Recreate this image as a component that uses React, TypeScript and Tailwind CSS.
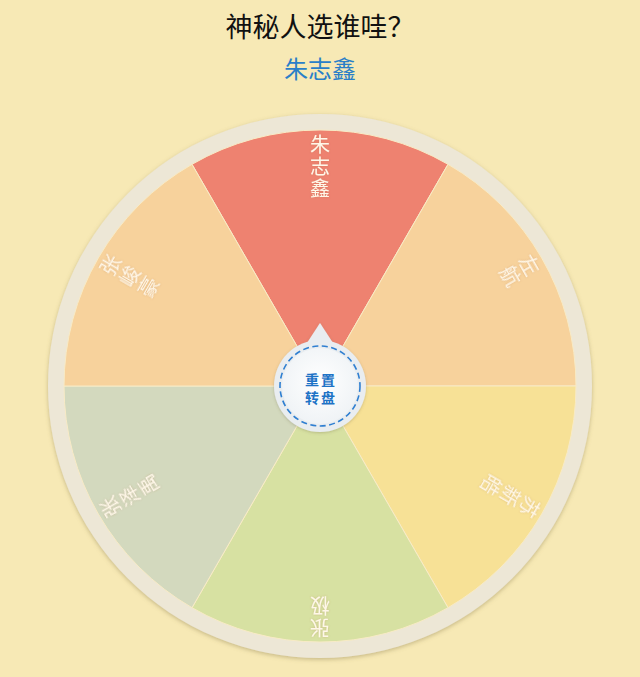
import React from 'react';

const C = 280; // wheel centre inside the svg
const R_IN = 256;

const segments = [
  { name: '朱志鑫', color: '#ee8270' },
  { name: '左航', color: '#f7d29c' },
  { name: '苏新皓', color: '#f7e196' },
  { name: '张极', color: '#d7e1a2' },
  { name: '张泽禹', color: '#d3d9be' },
  { name: '张峻豪', color: '#f7d29c' },
];

const pt = (deg: number, r: number) => {
  const a = ((deg - 90) * Math.PI) / 180;
  return [C + r * Math.cos(a), C + r * Math.sin(a)];
};

const slice = (i: number) => {
  const [x1, y1] = pt(i * 60 - 30, R_IN);
  const [x2, y2] = pt(i * 60 + 30, R_IN);
  return `M${C} ${C} L${x1} ${y1} A${R_IN} ${R_IN} 0 0 1 ${x2} ${y2} Z`;
};

const Wheel = () => (
  <svg width="560" height="560" viewBox="0 0 560 560" className="block">
    <defs>
      <filter id="ringShadow" x="-10%" y="-10%" width="120%" height="120%">
        <feDropShadow dx="0" dy="1.5" stdDeviation="2" floodColor="#8a7a4a" floodOpacity="0.45" />
      </filter>
      <filter id="txtGlow" x="-50%" y="-50%" width="200%" height="200%">
        <feDropShadow dx="0" dy="0" stdDeviation="1" floodColor="#b07040" floodOpacity="0.35" />
      </filter>
      <filter id="btnShadow" x="-30%" y="-30%" width="160%" height="160%">
        <feDropShadow dx="0" dy="1" stdDeviation="1.5" floodColor="#6a6040" floodOpacity="0.3" />
      </filter>
      <radialGradient id="btnInner" cx="50%" cy="45%" r="60%">
        <stop offset="0%" stopColor="#ffffff" />
        <stop offset="100%" stopColor="#eef2f5" />
      </radialGradient>
    </defs>

    <circle cx={C} cy={C} r={272} fill="#ede7d6" filter="url(#ringShadow)" />

    {segments.map((s, i) => (
      <path key={i} d={slice(i)} fill={s.color} stroke="#f8ebc6" strokeWidth="1" />
    ))}

    {/* names run from the rim towards the centre, one character per line */}
    {segments.map((s, i) => (
      <g key={s.name} transform={`rotate(${i * 60} ${C} ${C})`} filter="url(#txtGlow)">
        <text
          textAnchor="middle"
          dominantBaseline="central"
          fontSize="20"
          fill="#fff7e8"
          fontFamily="'Noto Sans CJK SC', 'Noto Sans', sans-serif"
        >
          {s.name.split('').map((ch, k) => (
            <tspan key={k} x={C} y={C - 243 + k * 22}>
              {ch}
            </tspan>
          ))}
        </text>
      </g>
    ))}

    <g filter="url(#btnShadow)">
      <path d={`M${C} ${C - 63} Q${C + 2} ${C - 60} ${C + 15} ${C - 40} L${C - 15} ${C - 40} Q${C - 2} ${C - 60} ${C} ${C - 63} Z`} fill="#e9edf0" />
      <circle cx={C} cy={C} r={46} fill="#e9edf0" />
    </g>
    <circle cx={C} cy={C} r={38} fill="url(#btnInner)" />
    <circle cx={C} cy={C} r={40} fill="none" stroke="#2f7fd1" strokeWidth="1.6" strokeDasharray="6 3.5" />
    <text textAnchor="middle" fontSize="14" fontWeight="700" fill="#1e73c6" letterSpacing="2" fontFamily="'Noto Sans CJK SC', sans-serif">
      <tspan x={C + 1} y={C - 1}>重置</tspan>
      <tspan x={C + 1} y={C + 17}>转盘</tspan>
    </text>
  </svg>
);

export default function App() {
  return (
    <div className="w-[640px] h-[677px] bg-[#f7e9b5] flex flex-col items-center overflow-hidden font-['Noto_Sans_CJK_SC',sans-serif]">
      <h1 className="mt-[8px] text-[27px] leading-[36px] text-[#111111] font-normal">神秘人选谁哇？</h1>
      <p className="mt-[8px] text-[24px] leading-[32px] text-[#2a7fc8]">朱志鑫</p>
      <div className="mt-[22px]">
        <Wheel />
      </div>
    </div>
  );
}
